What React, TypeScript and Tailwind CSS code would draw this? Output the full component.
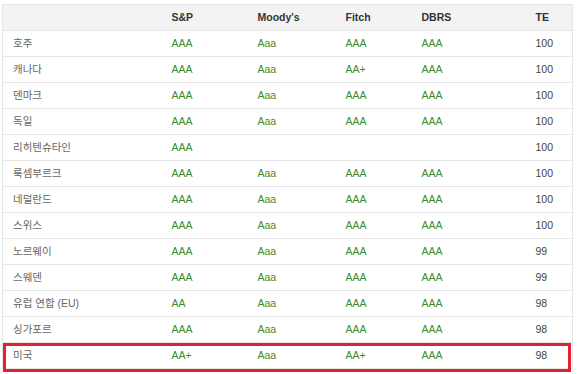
const rows: [string, string, string, string, string, string][] = [
	['호주', 'AAA', 'Aaa', 'AAA', 'AAA', '100'],
	['캐나다', 'AAA', 'Aaa', 'AA+', 'AAA', '100'],
	['덴마크', 'AAA', 'Aaa', 'AAA', 'AAA', '100'],
	['독일', 'AAA', 'Aaa', 'AAA', 'AAA', '100'],
	['리히텐슈타인', 'AAA', '', '', '', '100'],
	['룩셈부르크', 'AAA', 'Aaa', 'AAA', 'AAA', '100'],
	['네덜란드', 'AAA', 'Aaa', 'AAA', 'AAA', '100'],
	['스위스', 'AAA', 'Aaa', 'AAA', 'AAA', '100'],
	['노르웨이', 'AAA', 'Aaa', 'AAA', 'AAA', '99'],
	['스웨덴', 'AAA', 'Aaa', 'AAA', 'AAA', '99'],
	['유럽 연합 (EU)', 'AA', 'Aaa', 'AAA', 'AAA', '98'],
	['싱가포르', 'AAA', 'Aaa', 'AAA', 'AAA', '98'],
	['미국', 'AA+', 'Aaa', 'AA+', 'AAA', '98'],
];

const headers = ['', 'S&P', "Moody's", 'Fitch', 'DBRS', 'TE'];

export default function App() {
	return (
		<div
			className="h-[374px] w-[580px] bg-white pl-[2px] pt-[4px]"
			style={{ fontFamily: '"Liberation Sans", Arial, "Noto Sans CJK KR", sans-serif' }}
		>
			<div className="relative w-[571px]">
				<table className="w-[571px] table-fixed border-collapse border border-[#e6e6e6] text-[10.5px]">
					<colgroup>
						<col className="w-[159px]" />
						<col className="w-[86px]" />
						<col className="w-[88px]" />
						<col className="w-[76px]" />
						<col className="w-[114px]" />
						<col />
					</colgroup>
					<thead>
						<tr className="h-[26px] bg-[#f3f3f3]">
							{headers.map((h, i) => (
								<th key={i} className="pl-[10px] text-left font-bold text-[#333]">
									{h}
								</th>
							))}
						</tr>
					</thead>
					<tbody>
						{rows.map((r) => (
							<tr key={r[0]} className="h-[26px] border-t border-[#e6e6e6]">
								<td className="pl-[10px] text-[#666]">{r[0]}</td>
								<td className="pl-[10px] text-[#3d8a2c]">{r[1]}</td>
								<td className="pl-[10px] text-[#3d8a2c]">{r[2]}</td>
								<td className="pl-[10px] text-[#3d8a2c]">{r[3]}</td>
								<td className="pl-[10px] text-[#3d8a2c]">{r[4]}</td>
								<td className="pl-[10px] text-[#444]">{r[5]}</td>
							</tr>
						))}
					</tbody>
				</table>
				<div className="pointer-events-none absolute left-[1px] top-[339px] h-[29px] w-[568px] border-[3px] border-[#e5202e]" />
			</div>
		</div>
	);
}
